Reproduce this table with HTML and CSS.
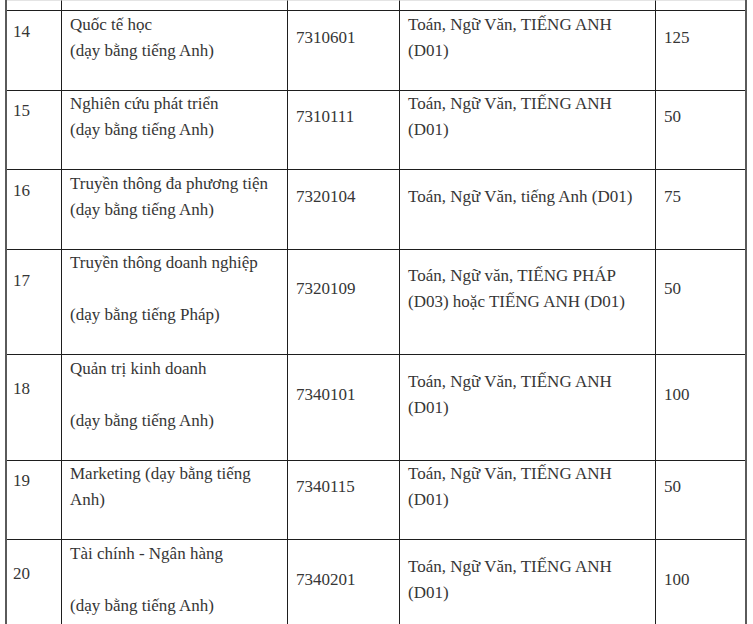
FILE: index.html
```html
<!DOCTYPE html>
<html lang="vi">
<head>
<meta charset="utf-8">
<link rel="stylesheet" href="styles.css">
</head>
<body>
<div class="grid">
  <div class="cell stub"></div><div class="cell stub"></div><div class="cell stub"></div><div class="cell stub"></div><div class="cell stub last"></div>

  <div class="cell no">14</div>
  <div class="cell"><span class="txt">Quốc tế học<br>(dạy bằng tiếng Anh)</span></div>
  <div class="cell"><span class="txt">7310601</span></div>
  <div class="cell"><span class="txt">Toán, Ngữ Văn, TIẾNG ANH (D01)</span></div>
  <div class="cell last"><span class="txt">125</span></div>

  <div class="cell no">15</div>
  <div class="cell"><span class="txt">Nghiên cứu phát triển<br>(dạy bằng tiếng Anh)</span></div>
  <div class="cell"><span class="txt">7310111</span></div>
  <div class="cell"><span class="txt">Toán, Ngữ Văn, TIẾNG ANH (D01)</span></div>
  <div class="cell last"><span class="txt">50</span></div>

  <div class="cell no">16</div>
  <div class="cell"><span class="txt">Truyền thông đa phương tiện<br>(dạy bằng tiếng Anh)</span></div>
  <div class="cell"><span class="txt">7320104</span></div>
  <div class="cell"><span class="txt">Toán, Ngữ Văn, tiếng Anh (D01)</span></div>
  <div class="cell last"><span class="txt">75</span></div>

  <div class="cell no no-hi">17</div>
  <div class="cell name2"><span class="txt">Truyền thông doanh nghiệp</span><span class="txt">(dạy bằng tiếng Pháp)</span></div>
  <div class="cell"><span class="txt">7320109</span></div>
  <div class="cell"><span class="txt">Toán, Ngữ văn, TIẾNG PHÁP (D03) hoặc TIẾNG ANH (D01)</span></div>
  <div class="cell last"><span class="txt">50</span></div>

  <div class="cell no">18</div>
  <div class="cell name2"><span class="txt">Quản trị kinh doanh</span><span class="txt">(dạy bằng tiếng Anh)</span></div>
  <div class="cell"><span class="txt">7340101</span></div>
  <div class="cell"><span class="txt">Toán, Ngữ Văn, TIẾNG ANH (D01)</span></div>
  <div class="cell last"><span class="txt">100</span></div>

  <div class="cell no">19</div>
  <div class="cell"><span class="txt">Marketing (dạy bằng tiếng Anh)</span></div>
  <div class="cell"><span class="txt">7340115</span></div>
  <div class="cell"><span class="txt">Toán, Ngữ Văn, TIẾNG ANH (D01)</span></div>
  <div class="cell last"><span class="txt">50</span></div>

  <div class="cell no">20</div>
  <div class="cell name2"><span class="txt">Tài chính - Ngân hàng</span><span class="txt">(dạy bằng tiếng Anh)</span></div>
  <div class="cell"><span class="txt">7340201</span></div>
  <div class="cell"><span class="txt">Toán, Ngữ Văn, TIẾNG ANH (D01)</span></div>
  <div class="cell last"><span class="txt">100</span></div>
</div>
</body>
</html>
```
FILE: styles.css
```css
html, body {
  margin: 0;
  padding: 0;
  background: #ffffff;
}

body {
  font-family: "Liberation Serif";
  font-size: 17px;
  line-height: 26px;
  color: #363636;
}

.grid {
  margin-left: 5px;
  width: 738px;
  display: grid;
  grid-template-columns: 55px 226px 112px 256px 89px;
  border-left: 2px solid #5a5a5a;
  border-right: 2px solid #5a5a5a;
}

.cell {
  display: flex;
  flex-direction: column;
  justify-content: center;
  padding: 0.5px 8px 26px 8px;
  border-right: 1px solid #1e1e1e;
  border-bottom: 1px solid #1e1e1e;
  font-family: "Liberation Serif";
}

.cell.last {
  border-right: none;
}

.txt {
  display: block;
  font-family: "Liberation Serif";
}

.cell.stub {
  height: 11px;
  padding: 0;
  box-sizing: border-box;
  border-top: 1px solid #e4e4e4;
}

.cell.no {
  padding-left: 6px;
  padding-bottom: 38px;
}

.cell.no-hi {
  padding-bottom: 42px;
}

.name2 {
  gap: 26px;
}
```
